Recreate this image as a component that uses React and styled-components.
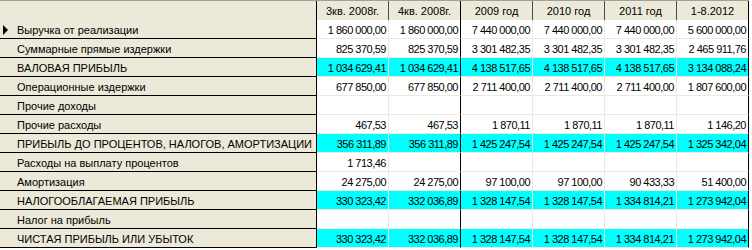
import React from 'react';
import styled, { createGlobalStyle } from 'styled-components';

const GlobalStyle = createGlobalStyle`
  html, body {
    margin: 0;
    padding: 0;
    background: #ffffff;
  }
  body {
    font-family: "Liberation Sans", Arial, sans-serif;
    font-size: 11px;
    color: #000;
  }
`;

const Grid = styled.div`
  display: grid;
  grid-template-columns: 317px repeat(6, 72px);
  grid-auto-rows: 19px;
  width: 749px;
  border-top: 1px solid #a0a0a0;
  background: #ece9d8;
`;

const HeadCell = styled.div`
  box-sizing: border-box;
  height: 20px;
  display: flex;
  align-items: center;
  justify-content: center;
  padding-top: 1px;
  background: #ece9d8;
  border-right: 1px solid ${(p) => (p.$corner ? '#000' : '#4a4a4a')};
  border-bottom: 1px solid #000;
  white-space: nowrap;
`;

const LabelCell = styled.div`
  box-sizing: border-box;
  display: flex;
  align-items: flex-start;
  padding: 2px 0 0 3px;
  line-height: 16px;
  background: #ece9d8;
  border-right: 1px solid #000;
  border-bottom: 1px solid #000;
  white-space: nowrap;
  overflow: hidden;
`;

const Marker = styled.span`
  flex: 0 0 14px;
  height: 16px;
  display: flex;
  align-items: center;

  &::before {
    content: '';
    display: ${(p) => (p.$active ? 'block' : 'none')};
    width: 0;
    height: 0;
    border-left: 5px solid #000;
    border-top: 5px solid transparent;
    border-bottom: 5px solid transparent;
  }
`;

const ValueCell = styled.div`
  box-sizing: border-box;
  padding: 2px 2px 0 0;
  line-height: 16px;
  text-align: right;
  letter-spacing: -0.5px;
  white-space: nowrap;
  background: ${(p) => (p.$hot ? '#00ffff' : '#ffffff')};
  border-right: 1px solid ${(p) => (p.$split ? '#000' : '#ece9d8')};
  border-bottom: 1px solid #ece9d8;
`;

const heads = ['3кв. 2008г.', '4кв. 2008г.', '2009 год', '2010 год', '2011 год', '1-8.2012'];

const taxable = ['330 323,42', '332 036,89', '1 328 147,54', '1 328 147,54', '1 334 814,21', '1 273 942,04'];

const rows = [
  { name: 'Выручка от реализации', active: true, v: ['1 860 000,00', '1 860 000,00', '7 440 000,00', '7 440 000,00', '7 440 000,00', '5 600 000,00'] },
  { name: 'Суммарные прямые издержки', v: ['825 370,59', '825 370,59', '3 301 482,35', '3 301 482,35', '3 301 482,35', '2 465 911,76'] },
  { name: 'ВАЛОВАЯ ПРИБЫЛЬ', hot: true, v: ['1 034 629,41', '1 034 629,41', '4 138 517,65', '4 138 517,65', '4 138 517,65', '3 134 088,24'] },
  { name: 'Операционные издержки', v: ['677 850,00', '677 850,00', '2 711 400,00', '2 711 400,00', '2 711 400,00', '1 807 600,00'] },
  { name: 'Прочие доходы', v: ['', '', '', '', '', ''] },
  { name: 'Прочие расходы', v: ['467,53', '467,53', '1 870,11', '1 870,11', '1 870,11', '1 146,20'] },
  { name: 'ПРИБЫЛЬ ДО ПРОЦЕНТОВ, НАЛОГОВ, АМОРТИЗАЦИИ', hot: true, v: ['356 311,89', '356 311,89', '1 425 247,54', '1 425 247,54', '1 425 247,54', '1 325 342,04'] },
  { name: 'Расходы на выплату процентов', v: ['1 713,46', '', '', '', '', ''] },
  { name: 'Амортизация', v: ['24 275,00', '24 275,00', '97 100,00', '97 100,00', '90 433,33', '51 400,00'] },
  { name: 'НАЛОГООБЛАГАЕМАЯ ПРИБЫЛЬ', hot: true, v: taxable },
  { name: 'Налог на прибыль', v: ['', '', '', '', '', ''] },
  { name: 'ЧИСТАЯ ПРИБЫЛЬ ИЛИ УБЫТОК', hot: true, v: taxable },
];

export default function App() {
  return (
    <>
      <GlobalStyle />
      <Grid>
        <HeadCell $corner />
        {heads.map((h, i) => (
          <HeadCell key={h} $corner={i === 1 || i === 5}>{h}</HeadCell>
        ))}
        {rows.map((r) => (
          <React.Fragment key={r.name}>
            <LabelCell>
              <Marker $active={r.active} />
              {r.name}
            </LabelCell>
            {r.v.map((val, i) => (
              <ValueCell key={i} $hot={r.hot} $split={i === 1 || i === 5}>
                {val}
              </ValueCell>
            ))}
          </React.Fragment>
        ))}
      </Grid>
    </>
  );
}
